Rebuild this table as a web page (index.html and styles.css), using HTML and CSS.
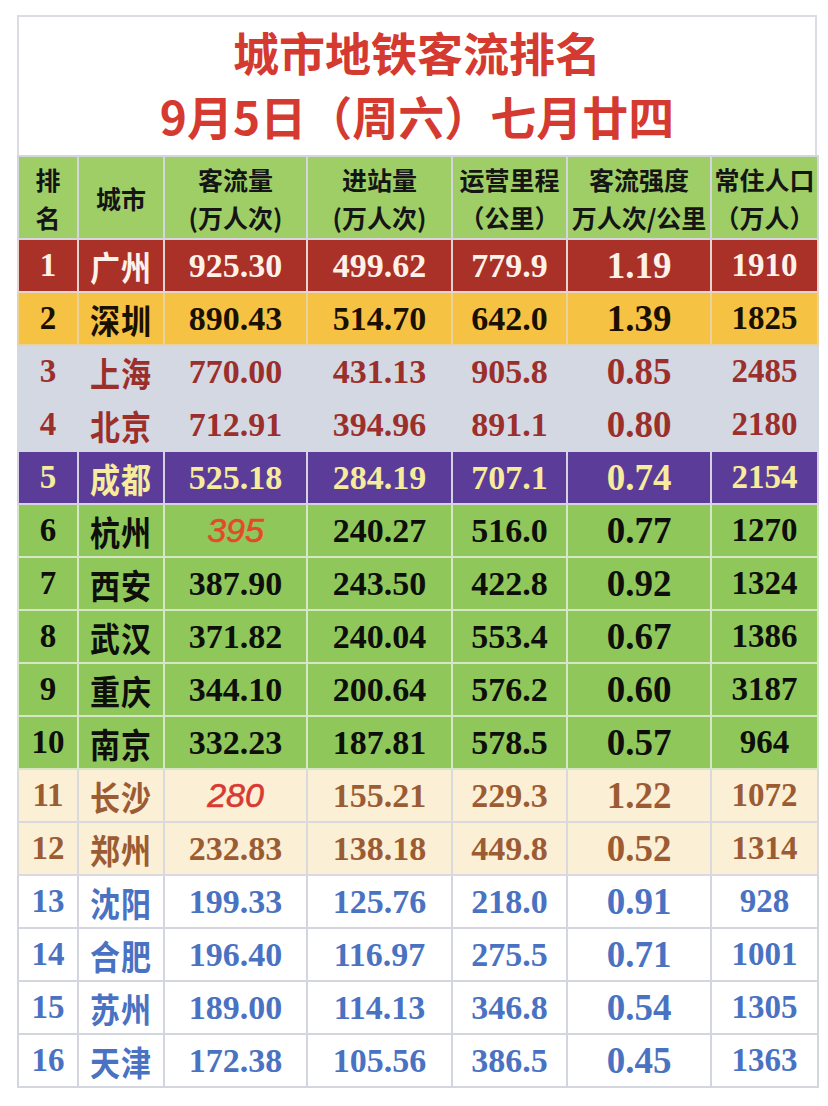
FILE: index.html
```html
<!DOCTYPE html>
<html lang="zh-CN">
<head>
<meta charset="utf-8">
<title>城市地铁客流排名</title>
<link rel="stylesheet" href="styles.css">
</head>
<body>
<div class="sheet">
  <div class="title">
    <div class="title-line">城市地铁客流排名</div>
    <div class="title-line">9月5日（周六）七月廿四</div>
  </div>
  <table class="rank">
    <colgroup>
      <col class="c-rank"><col class="c-city"><col class="c-flow"><col class="c-in"><col class="c-km"><col class="c-int"><col class="c-pop">
    </colgroup>
    <thead>
      <tr>
        <th>排<br>名</th>
        <th>城市</th>
        <th>客流量<br>(万人次)</th>
        <th>进站量<br>(万人次)</th>
        <th>运营里程<br>（公里）</th>
        <th>客流强度<br>万人次/公里</th>
        <th>常住人口<br>（万人）</th>
      </tr>
    </thead>
    <tbody>
      <tr class="r-red"><td class="n">1</td><td class="city"><span>广州</span></td><td class="v">925.30</td><td class="v">499.62</td><td class="v">779.9</td><td class="v big">1.19</td><td class="v pop">1910</td></tr>
      <tr class="r-yellow"><td class="n">2</td><td class="city"><span>深圳</span></td><td class="v">890.43</td><td class="v">514.70</td><td class="v">642.0</td><td class="v big">1.39</td><td class="v pop">1825</td></tr>
      <tr class="r-grey"><td class="n">3</td><td class="city"><span>上海</span></td><td class="v">770.00</td><td class="v">431.13</td><td class="v">905.8</td><td class="v big">0.85</td><td class="v pop">2485</td></tr>
      <tr class="r-grey"><td class="n">4</td><td class="city"><span>北京</span></td><td class="v">712.91</td><td class="v">394.96</td><td class="v">891.1</td><td class="v big">0.80</td><td class="v pop">2180</td></tr>
      <tr class="r-purple"><td class="n">5</td><td class="city"><span>成都</span></td><td class="v">525.18</td><td class="v">284.19</td><td class="v">707.1</td><td class="v big">0.74</td><td class="v pop">2154</td></tr>
      <tr class="r-green"><td class="n">6</td><td class="city"><span>杭州</span></td><td class="v est">395</td><td class="v">240.27</td><td class="v">516.0</td><td class="v big">0.77</td><td class="v pop">1270</td></tr>
      <tr class="r-green"><td class="n">7</td><td class="city"><span>西安</span></td><td class="v">387.90</td><td class="v">243.50</td><td class="v">422.8</td><td class="v big">0.92</td><td class="v pop">1324</td></tr>
      <tr class="r-green"><td class="n">8</td><td class="city"><span>武汉</span></td><td class="v">371.82</td><td class="v">240.04</td><td class="v">553.4</td><td class="v big">0.67</td><td class="v pop">1386</td></tr>
      <tr class="r-green"><td class="n">9</td><td class="city"><span>重庆</span></td><td class="v">344.10</td><td class="v">200.64</td><td class="v">576.2</td><td class="v big">0.60</td><td class="v pop">3187</td></tr>
      <tr class="r-green"><td class="n">10</td><td class="city"><span>南京</span></td><td class="v">332.23</td><td class="v">187.81</td><td class="v">578.5</td><td class="v big">0.57</td><td class="v pop">964</td></tr>
      <tr class="r-cream"><td class="n">11</td><td class="city"><span>长沙</span></td><td class="v est est2">280</td><td class="v">155.21</td><td class="v">229.3</td><td class="v big">1.22</td><td class="v pop">1072</td></tr>
      <tr class="r-cream"><td class="n">12</td><td class="city"><span>郑州</span></td><td class="v">232.83</td><td class="v">138.18</td><td class="v">449.8</td><td class="v big">0.52</td><td class="v pop">1314</td></tr>
      <tr class="r-white"><td class="n">13</td><td class="city"><span>沈阳</span></td><td class="v">199.33</td><td class="v">125.76</td><td class="v">218.0</td><td class="v big">0.91</td><td class="v pop">928</td></tr>
      <tr class="r-white"><td class="n">14</td><td class="city"><span>合肥</span></td><td class="v">196.40</td><td class="v">116.97</td><td class="v">275.5</td><td class="v big">0.71</td><td class="v pop">1001</td></tr>
      <tr class="r-white"><td class="n">15</td><td class="city"><span>苏州</span></td><td class="v">189.00</td><td class="v">114.13</td><td class="v">346.8</td><td class="v big">0.54</td><td class="v pop">1305</td></tr>
      <tr class="r-white"><td class="n">16</td><td class="city"><span>天津</span></td><td class="v">172.38</td><td class="v">105.56</td><td class="v">386.5</td><td class="v big">0.45</td><td class="v pop">1363</td></tr>
    </tbody>
  </table>
</div>
</body>
</html>
```
FILE: styles.css
```css
html, body {
  margin: 0;
  padding: 0;
  background: #ffffff;
}

body {
  padding: 15px 0 0 17px;
}

.sheet {
  width: 800px;
}

.title {
  border: 2px solid #dcdde2;
  border-bottom: none;
  padding: 2px 0 8px;
  text-align: center;
  background: #ffffff;
}

.title-line {
  font-family: "Noto Sans CJK SC", "Noto Sans", sans-serif;
  font-weight: 700;
  font-size: 46px;
  line-height: 64px;
  color: #d53a30;
}

.rank {
  width: 800px;
  border-collapse: collapse;
  table-layout: fixed;
}

.c-rank { width: 60px; }
.c-city { width: 86px; }
.c-flow { width: 143px; }
.c-in { width: 145px; }
.c-km { width: 115px; }
.c-int { width: 144px; }
.c-pop { width: 107px; }

.rank th,
.rank td {
  border: 2px solid #d3d6de;
  padding: 0;
  text-align: center;
  white-space: nowrap;
  overflow: hidden;
}

.rank th {
  height: 81px;
  background: #9fce67;
  color: #151515;
  font-family: "Noto Sans CJK SC", "Noto Sans", sans-serif;
  font-weight: 600;
  font-size: 25px;
  line-height: 38px;
}

.rank td {
  height: 51px;
}

.n {
  font-family: "Liberation Serif", "Times New Roman", serif;
  font-weight: 700;
  font-size: 33px;
}

.city {
  font-family: "Noto Sans CJK SC", "Noto Sans", sans-serif;
  font-weight: 700;
  font-size: 30px;
  letter-spacing: 1px;
}

.city span {
  display: inline-block;
  transform: scaleY(1.15);
}

.v {
  font-family: "Liberation Serif", "Times New Roman", serif;
  font-weight: 700;
  font-size: 34px;
}

.v.big {
  font-size: 37px;
}

.v.pop {
  font-size: 33px;
}

.v.est {
  font-family: "Liberation Sans", Arial, sans-serif;
  font-style: italic;
  font-weight: 400;
  font-size: 34px;
  color: #e24a2a;
  -webkit-text-stroke: 0.6px currentColor;
}

.r-cream .v.est2 {
  color: #d83a31;
}

.r-red td {
  background: #a93127;
  color: #fdf1ea;
  border-color: #e6d4d0;
}

.r-yellow td {
  background: #f6c244;
  color: #1a1000;
  border-color: #e9d39a;
}

.r-grey td {
  background: #d3d8e2;
  color: #9b2f2b;
  border-color: #d3d8e2;
}

.r-purple td {
  background: #5b3c98;
  color: #f6ec9c;
  border-color: #d7d2e2;
}

.r-green td {
  background: #8fc75b;
  color: #0e0e0a;
  border-color: #d6e6c6;
}

.r-cream td {
  background: #fbefd6;
  color: #9b5c34;
  border-color: #d9d9de;
}

.r-white td {
  background: #ffffff;
  color: #4a72c2;
  border-color: #d3d6de;
}
```
